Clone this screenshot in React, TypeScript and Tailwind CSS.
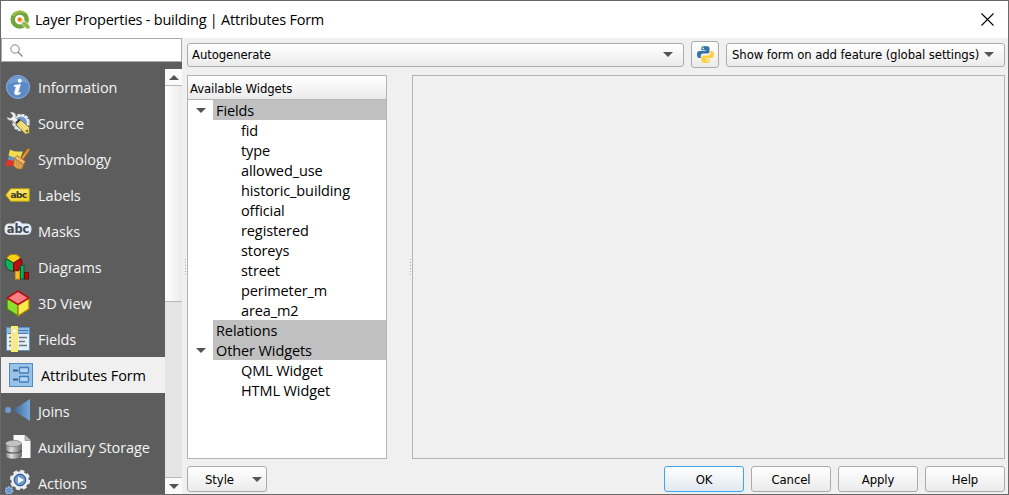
import React from "react";

const ui = "font-['Open_Sans','Noto_Sans',sans-serif] [font-stretch:normal]";
const tahoma = "font-['DejaVu_Sans_Condensed','DejaVu_Sans',sans-serif] [font-stretch:condensed]";

function QgisLogo() {
  return (
    <svg width="21" height="20" viewBox="0 0 21 20">
      <circle cx="9.700" cy="9.600" r="7" fill="none" stroke="#6fa53a" strokeWidth="4.400" />
      <path d="M3 6a8 8 0 0 1 12-3" fill="none" stroke="#a3c04a" strokeWidth="2" />
      <path d="M12 11.500h3.500l4.500 4.500v3h-3.500L12 14.500z" fill="#93b84a" stroke="#fff" strokeWidth=".7" />
      <path d="M7.500 7.500h4l2.500 2.500-3 3-3.500-1.500z" fill="#f8cda4" />
      <circle cx="9.700" cy="9.500" r="1.900" fill="#ee7913" />
    </svg>
  );
}

function InfoIcon() {
  return (
    <svg width="24" height="24" viewBox="0 0 24 24">
      <circle cx="12" cy="12" r="11.500" fill="#5b8ac6" stroke="#89b0df" />
      <path d="M2 10C3 5 7 2 12 2s9 3 10 7c-5-3-14-3-20 1z" fill="#7ca6d8" opacity=".7" />
      <circle cx="13.700" cy="5.800" r="2" fill="#fff" />
      <path d="M8.200 10.300l6.300-.9-2.400 8.100c-.2.900.7.800 2-.4l.7.900c-2.800 2.800-7 2.500-6.200-.9l1.600-5.400-2-.3z" fill="#fff" stroke="#fff" strokeWidth=".5" />
    </svg>
  );
}

function SourceIcon() {
  return (
    <svg width="24" height="24" viewBox="0 0 24 24">
      <circle cx="15" cy="11.500" r="7.600" fill="#6f9bd0" stroke="#dfe3e6" strokeWidth="2.500" strokeDasharray="3 1" />
      <circle cx="15" cy="11.500" r="6.700" fill="none" stroke="#e9ecee" strokeWidth="1.500" />
      <path d="M4 1.200c4-1 7 2 5.800 5.300l4.200 4.300-3.200 3.200-4.400-4.500C3.500 10.300 1 8.500.7 6l3.800 1.200L7 5z" fill="#eef0ef" stroke="#777" strokeWidth=".7" />
      <path d="M11 11l3-2.500 9.500 8v5.500l-4 1.200-9-8.700z" fill="#e9d36e" stroke="#6c6338" strokeWidth=".8" />
      <path d="M13.500 12.500l7.500 7M15.500 10.800l7 6.500" stroke="#fff0a2" />
      <path d="M10 12l4-3.500" stroke="#333" strokeWidth="2" />
      <circle cx="21" cy="20" r="1.300" fill="#866e22" />
    </svg>
  );
}

function SymbologyIcon() {
  return (
    <svg width="25" height="24" viewBox="0 0 25 24">
      <path d="M4 9l12-1-2 7-12-1z" fill="#6593bd" />
      <path d="M5 2.500c4 2.500 8 2 13 2l-3 7C10 11 7 9.500 3.500 8.500z" fill="#f2dc52" />
      <path d="M2.500 12.500l9 2 0 5.500c-4-1.500-7-1.500-11.500-.5z" fill="#e5332a" />
      <path d="M15.500 11.500l6.500-9c1-1.500 3-1 2.500.8l-6.500 9.500z" fill="#e6962c" stroke="#a86319" strokeWidth=".6" />
      <path d="M12 8.500l8.500 6-2 3-9-6z" fill="#efbd73" stroke="#985a19" strokeWidth=".7" />
      <path d="M9.500 11.500l9 6-1.500 4.500c-4 .5-6.500-.5-8.500-3.500z" fill="#dfa654" stroke="#a76a24" strokeWidth=".7" />
      <path d="M12 14l-1 5M14 15.500l-1 5M16.500 17l-1 5" stroke="#b9792b" strokeWidth=".6" />
    </svg>
  );
}

function LabelsIcon() {
  return (
    <svg width="25" height="14" viewBox="0 0 25 14">
      <path d="M.7 7l5-6.300h18.600v12.600H5.700z" fill="#f2d936" stroke="#b99c12" />
      <path d="M6 1.500h17.500V6H3z" fill="#fbef83" opacity=".6" />
      <text x="5.300" y="10" fontSize="9.500" fontWeight="700" fill="#3b3a2c" textLength="17" fontFamily="DejaVu Sans">abc</text>
    </svg>
  );
}

function MasksIcon() {
  return (
    <svg width="28" height="18" viewBox="0 0 28 18" className="-mt-1">
      <path d="M4 3.500h6q1-2.500 4-2.500t4 2.500h5q4.500.5 4.500 5.500t-4.500 5.800H5Q.5 14.500.5 9.500T4 3.500z" fill="#e5ebf8" />
      <text x="2.800" y="12.500" fontSize="12" fontWeight="700" fill="#3f474f" textLength="22.500" lengthAdjust="spacingAndGlyphs" fontFamily="DejaVu Sans">abc</text>
    </svg>
  );
}

function DiagramsIcon() {
  return (
    <svg width="25" height="26" viewBox="0 0 25 26">
      <path d="M8.500 9L1.500 4.500a8 8 0 0 1 14-.3z" fill="#f9cf17" stroke="#a8830a" />
      <path d="M8.500 9v8.200A8.200 8.200 0 0 1 1.300 4.700z" fill="#0fb35b" stroke="#064f2b" />
      <path d="M8.500 9v8.200a8.200 8.200 0 0 0 7.200-12.700z" fill="#c00d0d" stroke="#6a0505" />
      <rect x="10.500" y="17.500" width="4" height="7.500" fill="#f9bd25" stroke="#dc9710" />
      <rect x="15.500" y="11.500" width="3.500" height="13.500" fill="#0fb35b" stroke="#075b31" />
      <rect x="19.500" y="18.500" width="4" height="6.500" fill="#b40b0b" stroke="#6b0808" />
    </svg>
  );
}

function CubeIcon() {
  return (
    <svg width="24" height="27" viewBox="0 0 24 27" strokeLinejoin="round">
      <path d="M1 8l11 6.500V26L1 19z" fill="#8ee02f" stroke="#418215" strokeWidth="1.400" />
      <path d="M23 8l-11 6.500V26l11-7z" fill="#fce94b" stroke="#a6860d" strokeWidth="1.400" />
      <path d="M12 1l11 7-11 6.500L1 8z" fill="#f77f80" stroke="#b31217" strokeWidth="1.500" />
    </svg>
  );
}

function FieldsIcon() {
  return (
    <svg width="24" height="26" viewBox="0 0 24 26">
      <rect x=".5" y="1.500" width="23" height="23" fill="#e8eef5" stroke="#5c91c5" />
      <path d="M1 2h22v6H1z" fill="#8db9e2" />
      <path d="M12 4.500h10M2 7.500h20" stroke="#4c7faf" />
      <path d="M3 11.500h3M3 15.500h3M3 19.500h3M13 11.500h8M13 15.500h6M13 19.500h8" stroke="#667789" strokeWidth="1.500" />
      <rect x="5.500" y=".5" width="6" height="25" fill="#f5e793" stroke="#fff24d" />
      <circle cx="8.500" cy="5" r="1.500" fill="#fff" />
    </svg>
  );
}

function FormIcon() {
  return (
    <svg width="24" height="24" viewBox="0 0 24 24">
      <rect x=".5" y=".5" width="23" height="23" fill="#9ac2e6" stroke="#5389bc" />
      <rect x="10.500" y="4.500" width="9" height="5.500" rx=".5" fill="#b5d4f0" stroke="#3f80bd" strokeWidth="1.300" />
      <rect x="10.500" y="13.500" width="9" height="5.500" rx=".5" fill="#b5d4f0" stroke="#3f80bd" strokeWidth="1.300" />
      <path d="M4 7.500h5M4 16.500h5" stroke="#315f8f" strokeWidth="2" />
    </svg>
  );
}

function JoinsIcon() {
  return (
    <svg width="25" height="24" viewBox="0 0 25 24">
      <defs><linearGradient id="joins"><stop stopColor="#3c6594" /><stop offset="1" stopColor="#7aa8dc" /></linearGradient></defs>
      <circle cx="3" cy="11" r="3" fill="#6f9cd0" />
      <path d="M8 11L25 0v22z" fill="url(#joins)" />
    </svg>
  );
}

function StorageIcon() {
  return (
    <svg width="26" height="26" viewBox="0 0 26 26">
      <defs><linearGradient id="disk"><stop stopColor="#777" /><stop offset=".35" stopColor="#e0e0e0" /><stop offset="1" stopColor="#686868" /></linearGradient></defs>
      <path d="M8.500 1h12l5 5v18h-17z" fill="#fafafa" />
      <path d="M20 1v5.500h5.500z" fill="#bbb" stroke="#666" strokeWidth=".5" />
      <path d="M.5 10v12c0 4 16 4 16 0V10z" fill="url(#disk)" stroke="#555" strokeWidth=".6" />
      <ellipse cx="8.500" cy="9.500" rx="8" ry="3.200" fill="#c3c3c3" stroke="#666" strokeWidth=".6" />
      <path d="M.5 16c0 4 16 4 16 0" fill="none" stroke="#4e4e4e" strokeWidth="1.200" />
    </svg>
  );
}

function ActionsIcon() {
  return (
    <svg width="26" height="28" viewBox="0 0 26 28">
      <circle cx="15" cy="11" r="9" fill="none" stroke="#e5e7e8" strokeWidth="2.500" strokeDasharray="4.070 3" />
      <circle cx="15" cy="11" r="7.600" fill="#5985bd" stroke="#eef0f1" strokeWidth="2.300" />
      <circle cx="15" cy="11" r="5.600" fill="#6f9bd0" stroke="#355f93" />
      <path d="M13 7.500l6 3.500-6 3.500z" fill="#fff" />
      <circle cx="4" cy="21.500" r="3.500" fill="#6b99cf" stroke="#9fc0e5" strokeWidth="1.500" strokeDasharray="2 1" />
    </svg>
  );
}

function PythonIcon() {
  return (
    <svg width="17" height="17" viewBox="0 0 17 17">
      <path d="M8.300 0C5.500 0 4.300.8 4.300 2.300v2h4.300v.7H2.300C.8 5 0 6.300 0 8.500s.8 3.600 2.200 3.600h1.600V9.900c0-1.400 1-2.300 2.500-2.300h4c1.300 0 2.200-1 2.200-2.200V2.300C12.500.8 11.200 0 8.300 0z" fill="#3674a8" />
      <path d="M8.700 17c2.800 0 4-.8 4-2.300v-2H8.400V12h6.300c1.500 0 2.300-1.300 2.300-3.500s-.8-3.600-2.200-3.600h-1.600v2.200c0 1.400-1 2.300-2.500 2.300h-4c-1.300 0-2.200 1-2.200 2.200v3.100c0 1.500 1.300 2.300 4.200 2.300z" fill="#ffd140" />
      <circle cx="6.300" cy="2.400" r=".8" fill="#fff" />
      <circle cx="10.700" cy="14.600" r=".8" fill="#fff" />
    </svg>
  );
}

function Arrow({ up = false }: { up?: boolean }) {
  return (
    <svg width="10" height="5" viewBox="0 0 10 5" className="shrink-0">
      <path d={up ? "M0 5h10L5 0z" : "M0 0h10L5 5z"} fill="#555" />
    </svg>
  );
}

function Grip() {
  return (
    <svg width="2" height="17" viewBox="0 0 2 17" className="shrink-0">
      <path d="M.5 0v17" stroke="#aaa" strokeDasharray="1 2" />
      <path d="M1.500 1v16" stroke="#fff" strokeDasharray="1 2" />
    </svg>
  );
}

const pages = [
  { name: "Information", icon: <InfoIcon /> },
  { name: "Source", icon: <SourceIcon /> },
  { name: "Symbology", icon: <SymbologyIcon /> },
  { name: "Labels", icon: <LabelsIcon /> },
  { name: "Masks", icon: <MasksIcon /> },
  { name: "Diagrams", icon: <DiagramsIcon /> },
  { name: "3D View", icon: <CubeIcon /> },
  { name: "Fields", icon: <FieldsIcon /> },
  { name: "Attributes Form", icon: <FormIcon />, active: true },
  { name: "Joins", icon: <JoinsIcon /> },
  { name: "Auxiliary Storage", icon: <StorageIcon /> },
  { name: "Actions", icon: <ActionsIcon /> },
];

const groups = [
  {
    name: "Fields",
    items: ["fid", "type", "allowed_use", "historic_building", "official", "registered", "storeys", "street", "perimeter_m", "area_m2"],
  },
  { name: "Relations", items: [] },
  { name: "Other Widgets", items: ["QML Widget", "HTML Widget"] },
];

const control = "flex items-center rounded-[3px] border border-[#ababab] bg-linear-to-b from-white to-[#ebebeb] text-black";

function Sidebar() {
  return (
    <aside className="flex w-[181px] shrink-0 flex-col bg-[#5d5d5d]">
      <div className="flex h-6 shrink-0 items-center border border-[#ababab] bg-white pl-2">
        <svg width="13" height="13" viewBox="0 0 13 13" fill="none" stroke="#858585">
          <circle cx="5" cy="5" r="4.200" />
          <path d="M8 8l4.500 4.500" strokeWidth="1.300" />
        </svg>
      </div>
      <div className="mt-[7px] flex min-h-0 flex-1">
        <nav className="w-[164px] overflow-hidden">
          {pages.map((p) => (
            <div
              key={p.name}
              className={`flex h-9 items-center whitespace-nowrap text-[14.5px] tracking-[-0.1px] ${p.active ? "bg-[#f0f0f0] pl-[3px] text-black" : "text-[#f4f4f4]"}`}
            >
              <span className="flex w-[33px] shrink-0 items-center justify-center">{p.icon}</span>
              <span className="ml-1 pt-0.5">{p.name}</span>
            </div>
          ))}
        </nav>
        <div className="flex w-[17px] flex-col bg-[#e4e4e4]">
          <div className="flex h-[17px] shrink-0 items-center justify-center border-b border-[#b8b8b8] bg-[#fafafa]"><Arrow up /></div>
          <div className="h-[216px] shrink-0 border-b border-[#b8b8b8] bg-linear-to-r from-white to-[#ebebeb]" />
          <div className="flex-1" />
          <div className="flex h-[17px] shrink-0 items-center justify-center border-t border-[#b8b8b8] bg-[#fafafa]"><Arrow /></div>
        </div>
      </div>
    </aside>
  );
}

function WidgetTree() {
  return (
    <section className="w-[200px] border border-[#b4b4b4] bg-white text-black">
      <div className={`${tahoma} flex h-6 items-center border-b border-[#b4b4b4] bg-linear-to-b from-white to-[#ebebeb] pt-0.5 pl-0.5 text-[13px] tracking-[-0.1px]`}>
        Available Widgets
      </div>
      <div className="text-[14.5px] leading-[22px] tracking-[-0.1px]">
        {groups.map((g) => (
          <div key={g.name}>
            <div className="flex h-5">
              <div className="flex w-[25px] items-center justify-center">{g.items.length > 0 && <Arrow />}</div>
              <div className="flex-1 bg-[#c0c0c0] pl-[3px]">{g.name}</div>
            </div>
            {g.items.map((i) => (
              <div key={i} className="h-5 pl-[53px]">{i}</div>
            ))}
          </div>
        ))}
      </div>
    </section>
  );
}

export default function App() {
  return (
    <div className={`${ui} flex h-[495px] w-[1009px] flex-col overflow-hidden border border-[#696969] bg-[#f0f0f0]`}>
      <header className="flex h-[37px] shrink-0 items-center bg-white pr-[14px] pl-[9px] text-black">
        <QgisLogo />
        <h1 className="ml-1 flex-1 pt-px text-[14.5px] tracking-[-0.23px] whitespace-nowrap">Layer Properties - building | Attributes Form</h1>
        <svg width="13" height="13" viewBox="0 0 13 13" stroke="#000" strokeWidth="1.100"><path d="M.5.5l12 12M12.500.5l-12 12" /></svg>
      </header>
      <div className="flex min-h-0 flex-1">
        <Sidebar />
        <main className={`${tahoma} flex flex-1 flex-col pt-[3px] pr-[3px] pb-0.5 pl-[5px] text-[13px] tracking-[-0.1px]`}>
          <div className="flex h-[27px] shrink-0 items-center gap-[7px]">
            <div className={`${control} h-6 w-[497px] justify-between pr-2.5 pl-1`}>Autogenerate<Arrow /></div>
            <div className={`${control} h-[27px] w-7 justify-center`}><PythonIcon /></div>
            <div className={`${control} h-6 w-[279px] justify-between pr-2.5 pl-[5px] whitespace-nowrap`}>Show form on add feature (global settings)<Arrow /></div>
          </div>
          <div className={`${ui} -ml-1 mt-[7px] flex h-[384px] shrink-0`}>
            <div className="flex w-1 items-center pl-0.5"><Grip /></div>
            <WidgetTree />
            <div className="flex w-[25px] items-center justify-end"><Grip /></div>
            <section className="w-[593px] border border-[#b4b4b4]" />
          </div>
          <footer className="mt-[7px] flex h-[26px] shrink-0 gap-[7px]">
            <div className={`${control} mr-auto w-20 justify-between pt-px pr-1 pl-[17px]`}>Style<Arrow /></div>
            <button className="flex w-20 items-center justify-center rounded-[3px] border border-[#3ba7f0] bg-linear-to-b from-white to-[#e1e8ef] pt-px text-black">OK</button>
            {["Cancel", "Apply", "Help"].map((b) => (
              <button key={b} className={`${control} w-20 justify-center pt-px`}>{b}</button>
            ))}
          </footer>
        </main>
      </div>
    </div>
  );
}
